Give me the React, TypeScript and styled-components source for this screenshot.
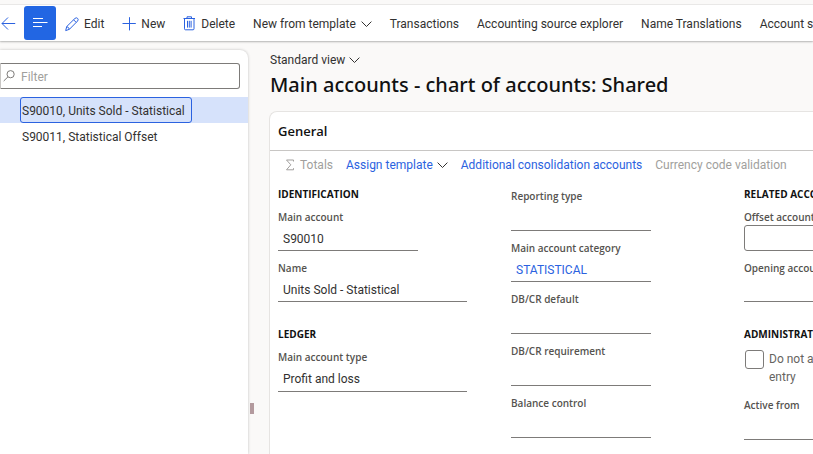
import React, { useId, useState } from "react";
import styled, { createGlobalStyle } from "styled-components";

const color = {
  page: "#faf9f8",
  surface: "#ffffff",
  accent: "#2266e3",
  link: "#2b62e0",
  text: "#323130",
  strong: "#111111",
  label: "#55534f",
  disabled: "#a19f9d",
  line: "#7d7b79",
  selected: "#d6e2fb",
};

const headingFont = `"Open Sans", "Noto Sans", sans-serif`;

const GlobalStyle = createGlobalStyle`
  *, *::before, *::after { box-sizing: border-box; }
  html, body, #root { height: 100%; }
  body {
    margin: 0;
    overflow: hidden;
    background: ${color.page};
    color: ${color.text};
    font-family: Roboto, "Open Sans", sans-serif;
    font-size: 12px;
    line-height: 18px;
  }
  button, input { font: inherit; color: inherit; }
`;

const Page = styled.div`
  display: flex;
  flex-direction: column;
  height: 100%;
  padding-top: 5px;
  overflow: hidden;
`;

const Toolbar = styled.header`
  display: flex;
  align-items: center;
  flex: none;
  height: 36px;
  background: ${color.surface};
  box-shadow: 0 0 1px rgba(0, 0, 0, 0.3), 0 1px 2px rgba(0, 0, 0, 0.24);
`;

const PlainButton = styled.button`
  display: inline-flex;
  align-items: center;
  flex: none;
  padding: 0;
  border: 0;
  background: none;
  white-space: nowrap;
  cursor: pointer;
`;

const BackButton = styled(PlainButton)`
  width: 24px;
  height: 32px;
  color: ${color.link};
`;

const ListButton = styled(PlainButton)`
  justify-content: center;
  width: 32px;
  height: 34px;
  border-radius: 3px;
  background: ${color.accent};
  color: white;
`;

const Commands = styled.nav`
  display: flex;
  align-items: center;
  gap: 18px;
  padding-left: 9px;
`;

const Command = styled(PlainButton)`
  gap: 5px;
  height: 34px;
  padding-top: 2px;
  svg:first-child { color: ${color.link}; }
`;

const Body = styled.div`
  display: flex;
  flex: 1;
  min-height: 0;
  padding-top: 9px;
`;

const ListPane = styled.aside`
  flex: none;
  width: 248px;
  padding-top: 13px;
  border-radius: 0 8px 0 0;
  background: ${color.surface};
  box-shadow: 0 0 3px rgba(0, 0, 0, 0.24);
`;

const FilterBox = styled.label`
  display: flex;
  align-items: center;
  gap: 6px;
  height: 26px;
  margin-right: 8px;
  padding-left: 2px;
  border: 1px solid ${color.line};
  border-left-color: #c8c6c4;
  border-radius: 0 3px 3px 0;
  color: ${color.disabled};
`;

const FilterInput = styled.input`
  flex: 1;
  min-width: 0;
  padding: 2px 0 0;
  border: 0;
  outline: 0;
  background: none;
  color: ${color.text};
  &::placeholder { color: ${color.disabled}; opacity: 1; }
`;

const Records = styled.ul`
  margin: 8px 0 0;
  padding: 0;
  list-style: none;
`;

const Record = styled.li<{ $selected: boolean }>`
  display: flex;
  height: 26px;
  padding-left: 20px;
  background: ${(p) => (p.$selected ? color.selected : "transparent")};
`;

const RecordButton = styled(PlainButton)<{ $selected: boolean }>`
  padding: 2px 6px 0 1px;
  border: 1px solid ${(p) => (p.$selected ? color.link : "transparent")};
  border-radius: 3px;
`;

const Splitter = styled.div`
  display: flex;
  flex: none;
  width: 21px;
  padding: 353px 0 0 2px;
  &::before {
    content: "";
    width: 4px;
    height: 11px;
    background: #b39a9e;
  }
`;

const Main = styled.main`
  display: flex;
  flex: 1;
  flex-direction: column;
  min-width: 0;
`;

const ViewButton = styled(PlainButton)`
  align-self: flex-start;
  gap: 4px;
  height: 20px;
  margin-left: 1px;
`;

const Title = styled.h1`
  margin: 0 0 11px 1px;
  color: ${color.strong};
  font-family: "Noto Sans", sans-serif;
  font-size: 20px;
  font-weight: 500;
  line-height: 30px;
  white-space: nowrap;
`;

const Card = styled.section`
  flex: 1;
  overflow: hidden;
  border: solid #e6e4e2;
  border-width: 1px 0 0 1px;
  border-radius: 8px 0 0 0;
  background: ${color.surface};
`;

const CardTitle = styled.h2`
  margin: 0;
  padding: 10px 8px;
  border-bottom: 1px solid #c8c6c4;
  color: ${color.strong};
  font-family: ${headingFont};
  font-size: 13px;
  font-weight: 600;
  line-height: 18px;
`;

const Actions = styled.div`
  display: flex;
  align-items: center;
  gap: 13px;
  height: 28px;
  padding-left: 15px;
`;

const Action = styled(PlainButton)`
  gap: 4px;
  color: ${color.link};
  &:disabled { color: ${color.disabled}; cursor: default; }
`;

const Columns = styled.div`
  display: grid;
  grid-template-columns: repeat(3, 200px);
  column-gap: 33px;
  padding: 7px 8px;
`;

const Column = styled.div<{ $inset?: boolean }>`
  display: flex;
  flex-direction: column;
  gap: ${(p) => (p.$inset ? 9 : 24)}px;
  padding-top: ${(p) => (p.$inset ? 2 : 0)}px;
`;

const Group = styled.section`
  display: flex;
  flex-direction: column;
  gap: 9px;
`;

const GroupTitle = styled.h3`
  margin: 0 0 -2px;
  color: ${color.strong};
  font-family: ${headingFont};
  font-size: 10px;
  font-weight: 700;
  line-height: 16px;
  white-space: nowrap;
`;

const FieldBox = styled.div<{ $wide?: boolean }>`
  display: flex;
  flex-direction: column;
  width: ${(p) => (p.$wide ? 189 : 140)}px;
`;

const FieldLabel = styled.label`
  color: ${color.label};
  font-family: ${headingFont};
  font-size: 10px;
  font-weight: 600;
  line-height: 16px;
  white-space: nowrap;
`;

const FieldInput = styled.input<{ $boxed?: boolean; $tall?: boolean }>`
  width: 100%;
  height: ${(p) => (p.$tall ? 27 : 26)}px;
  padding: 2px 5px 0;
  border: solid ${color.line};
  border-width: ${(p) => (p.$boxed ? "1px" : "0 0 1px")};
  border-radius: ${(p) => (p.$boxed ? "3px" : "0")};
  outline: 0;
  background: none;
`;

const LinkValue = styled.a`
  height: 26px;
  padding: 1px 5px 0;
  border-bottom: 1px solid ${color.line};
  color: ${color.link};
  line-height: 26px;
  text-decoration: none;
`;

const CheckRow = styled.label`
  display: flex;
  align-items: flex-start;
  gap: 5px;
  width: 160px;
  padding: 1px 0 2px 1px;
  color: #66645f;
`;

const CheckInput = styled.input`
  appearance: none;
  flex: none;
  width: 19px;
  height: 19px;
  margin: 0;
  border: 1px solid ${color.line};
  border-radius: 3px;
  &:checked { background: ${color.accent}; }
`;

const Icon = styled.svg`
  flex: none;
  fill: none;
  stroke: currentColor;
  stroke-width: 1;
`;

const BackIcon = () => (
  <Icon width="16" height="16" viewBox="0 0 16 16" aria-hidden>
    <path d="M15.2 8.5H2M8 2.5L2 8.5L8 14.5" />
  </Icon>
);
const LinesIcon = () => (
  <Icon width="16" height="12" viewBox="0 0 16 12" aria-hidden>
    <path d="M1 1.5H11M1 5.5H15.5M1 9.5H10" />
  </Icon>
);
const PencilIcon = () => (
  <Icon width="14" height="15" viewBox="0 0 14 15" aria-hidden>
    <path d="M.7 13.6L1.7 9.6L10 1.4Q11.4 .2 12.6 1.4Q13.8 2.6 12.6 4L4.4 12.3ZM8.6 2.8L11.2 5.4M1.7 9.6Q3.8 10.1 4.4 12.3" />
  </Icon>
);
const PlusIcon = () => (
  <Icon width="14" height="15" viewBox="0 0 14 15" aria-hidden>
    <path d="M7.5 .2V13.4M.5 6.5H13.8" />
  </Icon>
);
const TrashIcon = () => (
  <Icon width="13" height="16" viewBox="0 0 13 16" aria-hidden>
    <path d="M.5 2.5H12M4 2.5V.8H8.5V2.5M1.5 2.5V12.8Q1.5 13.8 2.5 13.8H10Q11 13.8 11 12.8V2.5M4.5 4.8V11.6M6.3 4.8V11.6M8.1 4.8V11.6" />
  </Icon>
);
const SearchIcon = () => (
  <Icon width="12" height="12" viewBox="0 0 12 12" aria-hidden>
    <circle cx="7.6" cy="4.2" r="3.6" stroke="#7d7b79" />
    <path d="M5 6.8L.7 11" stroke="#7d7b79" />
  </Icon>
);
const ChevronIcon = () => (
  <Icon width="11" height="7" viewBox="0 0 11 7" aria-hidden>
    <path d="M.6 .6L5.5 5.5L10.4 .6" stroke="#323130" />
  </Icon>
);
const SigmaIcon = () => (
  <Icon width="11" height="12" viewBox="0 0 11 12" aria-hidden>
    <path d="M8.5 2.5V1H1.5L5.8 5.8L1.5 10.8H8.5V9.2" />
  </Icon>
);

type FieldProps = { label: string; value?: string; wide?: boolean; boxed?: boolean; tall?: boolean };

function Field({ label, value = "", wide, boxed, tall }: FieldProps) {
  const id = useId();
  return (
    <FieldBox $wide={wide}>
      <FieldLabel htmlFor={id}>{label}</FieldLabel>
      <FieldInput id={id} defaultValue={value} readOnly={!boxed} $boxed={boxed} $tall={tall} />
    </FieldBox>
  );
}

const commands = [
  { text: "Edit", icon: <PencilIcon /> },
  { text: "New", icon: <PlusIcon /> },
  { text: "Delete", icon: <TrashIcon /> },
  { text: "New from template", menu: true },
  { text: "Transactions" },
  { text: "Accounting source explorer" },
  { text: "Name Translations" },
  { text: "Account statement" },
];

const records = ["S90010, Units Sold - Statistical", "S90011, Statistical Offset"];

export default function App() {
  const [selected, setSelected] = useState(0);
  return (
    <>
      <GlobalStyle />
      <Page>
        <Toolbar>
          <BackButton aria-label="Back"><BackIcon /></BackButton>
          <ListButton aria-label="Show list"><LinesIcon /></ListButton>
          <Commands>
            {commands.map((c) => (
              <Command key={c.text}>
                {c.icon}
                <span>{c.text}</span>
                {c.menu && <ChevronIcon />}
              </Command>
            ))}
          </Commands>
        </Toolbar>
        <Body>
          <ListPane>
            <FilterBox>
              <SearchIcon />
              <FilterInput placeholder="Filter" aria-label="Filter" />
            </FilterBox>
            <Records>
              {records.map((r, i) => (
                <Record key={r} $selected={i === selected}>
                  <RecordButton $selected={i === selected} onClick={() => setSelected(i)}>{r}</RecordButton>
                </Record>
              ))}
            </Records>
          </ListPane>
          <Splitter role="separator" aria-orientation="vertical" />
          <Main>
            <ViewButton>Standard view <ChevronIcon /></ViewButton>
            <Title>Main accounts - chart of accounts: Shared</Title>
            <Card>
              <CardTitle>General</CardTitle>
              <Actions>
                <Action disabled><SigmaIcon />Totals</Action>
                <Action>Assign template <ChevronIcon /></Action>
                <Action>Additional consolidation accounts</Action>
                <Action disabled>Currency code validation</Action>
              </Actions>
              <Columns>
                <Column>
                  <Group>
                    <GroupTitle>IDENTIFICATION</GroupTitle>
                    <Field label="Main account" value="S90010" />
                    <Field label="Name" value="Units Sold - Statistical" wide />
                  </Group>
                  <Group>
                    <GroupTitle>LEDGER</GroupTitle>
                    <Field label="Main account type" value="Profit and loss" wide tall />
                  </Group>
                </Column>
                <Column $inset>
                  <Field label="Reporting type" tall />
                  <FieldBox>
                    <FieldLabel as="span" id="category-label">Main account category</FieldLabel>
                    <LinkValue href="#category" aria-describedby="category-label">STATISTICAL</LinkValue>
                  </FieldBox>
                  <Field label="DB/CR default" tall />
                  <Field label="DB/CR requirement" tall />
                  <Field label="Balance control" tall />
                </Column>
                <Column>
                  <Group>
                    <GroupTitle>RELATED ACCOUNTS</GroupTitle>
                    <Field label="Offset account" boxed />
                    <Field label="Opening account" />
                  </Group>
                  <Group>
                    <GroupTitle>ADMINISTRATION</GroupTitle>
                    <CheckRow>
                      <CheckInput type="checkbox" />
                      <span>Do not allow manual entry</span>
                    </CheckRow>
                    <Field label="Active from" tall />
                  </Group>
                </Column>
              </Columns>
            </Card>
          </Main>
        </Body>
      </Page>
    </>
  );
}
